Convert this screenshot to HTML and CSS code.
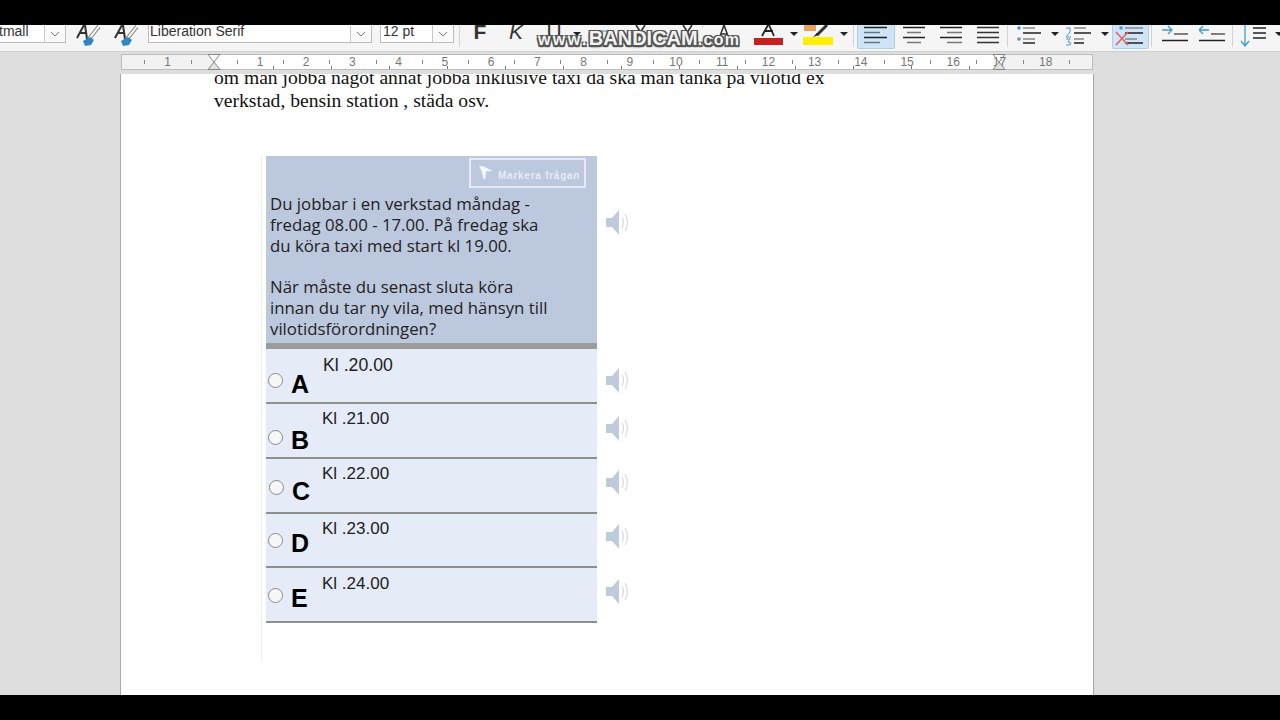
FILE: index.html
```html
<!DOCTYPE html>
<html lang="sv">
<head>
<meta charset="utf-8">
<title>Vilotid</title>
<link rel="stylesheet" href="styles.css">
</head>
<body>
<div class="app">
  <div class="black-bar"></div>
  <div class="toolbar">
    <div class="combo combo-style"><span class="combo-text tight">tmall</span><span class="combo-btn"><svg width="10" height="6" viewBox="0 0 10 6"><path d="M1 1l4 4 4-4" fill="none" stroke="#777"/></svg></span></div>
    <svg class="m9" width="25" height="27" viewBox="0 0 25 27"><path d="M2 13L9 0M10 0l2 14M4 8h7" fill="none" stroke="#333" stroke-width="2"/><path d="M25 0L14 14" stroke="#888" stroke-width="4"/><path d="M25 0L14 14" stroke="#fff" stroke-width="2"/><path d="M8 16l7-4 4 3-3 5-6 1z" fill="#2f86c0"/></svg>
    <svg class="m13" width="25" height="27" viewBox="0 0 25 27"><path d="M2 13L9 0M10 0l2 14M4 8h7" fill="none" stroke="#333" stroke-width="2"/><path d="M25 0L14 14" stroke="#888" stroke-width="4"/><path d="M25 0L14 14" stroke="#fff" stroke-width="2"/><path d="M8 16l7-4 4 3-3 5-6 1z" fill="#2f86c0"/></svg>
    <div class="combo combo-font m10"><span class="combo-text">Liberation Serif</span><span class="combo-btn"><svg width="10" height="6" viewBox="0 0 10 6"><path d="M1 1l4 4 4-4" fill="none" stroke="#777"/></svg></span></div>
    <div class="combo combo-size m8"><span class="combo-text">12 pt</span><span class="combo-btn"><svg width="10" height="6" viewBox="0 0 10 6"><path d="M1 1l4 4 4-4" fill="none" stroke="#777"/></svg></span></div>
    <span class="sep m5"></span>
    <span class="fmt fmt-b m12">F</span>
    <span class="fmt fmt-i m20">K</span>
    <span class="fmt fmt-u m21">U</span>
    <span class="caret m10"></span>
    <svg class="m9" width="155" height="27" viewBox="0 0 155 27"><path d="M2 6h22" stroke="#3f8fc0"/><path d="M46 0l9 14M55 0l-9 14M93 0l9 14M102 0l-9 14" stroke="#333" stroke-width="1.6"/><path d="M35 14h3M113 0v3" stroke="#ddd"/><path d="M129 14l5-14 5 14M131 9h6" fill="none" stroke="#333" stroke-width="1.6"/><path d="M140 15l5-5 3 3-5 5z" fill="#c8343a"/></svg>
    <svg class="m9" width="29" height="27" viewBox="0 0 29 27"><path d="M8 11L14 0M20 11L15 0M10 6h9" fill="none" stroke="#222" stroke-width="1.8"/><rect x="0" y="13" width="29" height="7" fill="#c8201e"/></svg>
    <span class="caret m7"></span>
    <svg class="m5" width="30" height="27" viewBox="0 0 30 27"><rect x="1" y="0" width="12" height="6" fill="#e9a45c"/><path d="M14 10L24 0" stroke="#333" stroke-width="3"/><path d="M10 12l4-4 2 2z" fill="#222"/><rect x="0" y="12" width="30" height="8" fill="#fef000"/></svg>
    <span class="caret m7"></span>
    <span class="sep m5"></span>
    <span class="tool-on m3"><svg width="37" height="24" viewBox="0 0 37 24"><path d="M7 2.500h23M7 12.500h23" stroke="#222" stroke-width="1.500"/><path d="M7 7.500h16M7 17.500h16" stroke="#5d7a8a" stroke-width="1.500"/></svg></span>
    <svg class="m8" width="22" height="27" viewBox="0 0 22 27"><path d="M0 2.500h22M0 12.500h22" stroke="#222" stroke-width="1.500"/><path d="M4 7.500h14M4 17.500h14" stroke="#777" stroke-width="1.500"/></svg>
    <svg class="m15" width="22" height="27" viewBox="0 0 22 27"><path d="M0 2.500h22M0 12.500h22" stroke="#222" stroke-width="1.500"/><path d="M7 7.500h15M7 17.500h15" stroke="#777" stroke-width="1.500"/></svg>
    <svg class="m15" width="22" height="27" viewBox="0 0 22 27"><path d="M0 2.500h22M0 7.500h22M0 12.500h22M0 17.500h22" stroke="#333" stroke-width="1.500"/></svg>
    <span class="sep m8"></span>
    <svg class="m9" width="24" height="27" viewBox="0 0 24 27"><circle cx="2" cy="3" r="1.800" fill="#4c9bc9"/><circle cx="2" cy="14" r="1.800" fill="#4c9bc9"/><path d="M6 3h12M6 14h12" stroke="#888" stroke-width="1.500"/><path d="M6 8h18M6 18h12" stroke="#222" stroke-width="1.500"/></svg>
    <span class="caret m10"></span>
    <svg class="m7" width="25" height="27" viewBox="0 0 25 27"><path d="M0 3h4v4l-4 5h5M0 14h4l-2 3 3 1-1 2H0" fill="none" stroke="#4c9bc9"/><path d="M8 3h12M8 14h10" stroke="#888" stroke-width="1.500"/><path d="M8 8h17M8 18h10" stroke="#222" stroke-width="1.500"/></svg>
    <span class="caret m10"></span>
    <span class="tool-on m3"><svg width="36" height="24" viewBox="0 0 36 24"><circle cx="9" cy="3" r="1.800" fill="#4c9bc9"/><path d="M13 3h18M13 14h12" stroke="#888" stroke-width="1.500"/><path d="M13 8h18M13 18h18" stroke="#222" stroke-width="1.500"/><path d="M4 7l12 13M16 7L4 20" stroke="#e0656a" stroke-width="1.700"/></svg></span>
    <span class="sep m2"></span>
    <svg class="m10" width="26" height="27" viewBox="0 0 26 27"><path d="M0 5h9M6 1l4 4-4 4" fill="none" stroke="#3f9bd0" stroke-width="1.300"/><path d="M12 9h14" stroke="#555" stroke-width="1.500"/><path d="M0 15.500h26" stroke="#222" stroke-width="1.500"/></svg>
    <svg class="m11" width="26" height="27" viewBox="0 0 26 27"><path d="M10 5H1M4 1L0 5l4 4" fill="none" stroke="#3f9bd0" stroke-width="1.300"/><path d="M12 9h14" stroke="#555" stroke-width="1.500"/><path d="M0 15.500h26" stroke="#222" stroke-width="1.500"/></svg>
    <span class="sep m7"></span>
    <svg class="m7" width="26" height="27" viewBox="0 0 26 27"><path d="M5 0v21M1 16l4 5 4-5" fill="none" stroke="#3f9bd0" stroke-width="1.300"/><path d="M13 3h13M13 8h13M13 13h13" stroke="#222" stroke-width="1.500"/></svg>
    <span class="caret m9"></span>
    <div class="watermark"><span class="wm-www">www.</span>BANDICAM<span class="wm-com">.com</span></div>
  </div>
  <div class="ruler-row">
    <div class="ruler">
      <span class="cell tick"></span><span class="cell">1</span><span class="cell tick"></span>
      <span class="cell"><svg class="hourglass" width="14" height="16" viewBox="0 0 14 16"><path d="M1 .5h12L7 8z" fill="#fff" stroke="#888"/><path d="M7 8l6 7.500H1z" fill="#e2e2e2" stroke="#888"/></svg></span>
      <span class="cell tick"></span><span class="cell">1</span><span class="cell tick"></span><span class="cell">2</span><span class="cell tick"></span><span class="cell">3</span><span class="cell tick"></span><span class="cell">4</span><span class="cell tick"></span><span class="cell">5</span><span class="cell tick"></span><span class="cell">6</span><span class="cell tick"></span><span class="cell">7</span><span class="cell tick"></span><span class="cell">8</span><span class="cell tick"></span><span class="cell">9</span><span class="cell tick"></span><span class="cell">10</span><span class="cell tick"></span><span class="cell">11</span><span class="cell tick"></span><span class="cell">12</span><span class="cell tick"></span><span class="cell">13</span><span class="cell tick"></span><span class="cell">14</span><span class="cell tick"></span><span class="cell">15</span><span class="cell tick"></span><span class="cell">16</span><span class="cell tick"></span>
      <span class="cell">17<svg class="hourglass" width="14" height="16" viewBox="0 0 14 16"><path d="M7 8l6 7.500H1z" fill="#e2e2e2" stroke="#888"/><path d="M1 .5h12L7 8z" fill="none" stroke="#888"/></svg></span>
      <span class="cell tick"></span><span class="cell">18</span><span class="cell tick"></span>
    </div>
  </div>
  <div class="workspace">
    <main class="page">
      <p class="doc-text">om man jobba något annat jobba inklusive taxi då ska man tänka på vilotid ex<br>verkstad, bensin station , städa osv.</p>
      <section class="quiz">
        <div class="row">
          <div class="question">
            <div class="flag-btn"><svg width="17" height="17" viewBox="0 0 17 17"><path d="M1 1l5 .5 9 4.500-7 .5-.5 7.500h-2l-2-8z" fill="#f2f5fa"/></svg><span>Markera frågan</span></div>
            <p class="q-text">Du jobbar i en verkstad måndag -<br>fredag 08.00 - 17.00. På fredag ska<br>du köra taxi med start kl 19.00.<br><br>När måste du senast sluta köra<br>innan du tar ny vila, med hänsyn till<br>vilotidsförordningen?</p>
          </div>
          <svg class="speaker spk-q" width="24" height="25" viewBox="0 0 24 25"><path d="M0 8h6l7-8v25l-7-8H0z" fill="#bfcadc"/><path d="M16 7q3 5.500 0 11M19 4q5 8.500 0 17" fill="none" stroke="#d4dbe7" stroke-width="1.200"/></svg>
        </div>
        <div class="row">
          <div class="option opt-a"><span class="radio"></span><b class="letter">A</b><span class="answer">Kl .20.00</span></div>
          <svg class="speaker spk-a" width="24" height="25" viewBox="0 0 24 25"><path d="M0 8h6l7-8v25l-7-8H0z" fill="#bfcadc"/><path d="M16 7q3 5.500 0 11M19 4q5 8.500 0 17" fill="none" stroke="#d4dbe7" stroke-width="1.200"/></svg>
        </div>
        <div class="row">
          <div class="option opt-b"><span class="radio"></span><b class="letter">B</b><span class="answer">Kl .21.00</span></div>
          <svg class="speaker spk-b" width="24" height="25" viewBox="0 0 24 25"><path d="M0 8h6l7-8v25l-7-8H0z" fill="#bfcadc"/><path d="M16 7q3 5.500 0 11M19 4q5 8.500 0 17" fill="none" stroke="#d4dbe7" stroke-width="1.200"/></svg>
        </div>
        <div class="row">
          <div class="option opt-c"><span class="radio"></span><b class="letter">C</b><span class="answer">Kl .22.00</span></div>
          <svg class="speaker spk-c" width="24" height="25" viewBox="0 0 24 25"><path d="M0 8h6l7-8v25l-7-8H0z" fill="#bfcadc"/><path d="M16 7q3 5.500 0 11M19 4q5 8.500 0 17" fill="none" stroke="#d4dbe7" stroke-width="1.200"/></svg>
        </div>
        <div class="row">
          <div class="option opt-d"><span class="radio"></span><b class="letter">D</b><span class="answer">Kl .23.00</span></div>
          <svg class="speaker spk-d" width="24" height="25" viewBox="0 0 24 25"><path d="M0 8h6l7-8v25l-7-8H0z" fill="#bfcadc"/><path d="M16 7q3 5.500 0 11M19 4q5 8.500 0 17" fill="none" stroke="#d4dbe7" stroke-width="1.200"/></svg>
        </div>
        <div class="row">
          <div class="option opt-e"><span class="radio"></span><b class="letter">E</b><span class="answer">Kl .24.00</span></div>
          <svg class="speaker spk-e" width="24" height="25" viewBox="0 0 24 25"><path d="M0 8h6l7-8v25l-7-8H0z" fill="#bfcadc"/><path d="M16 7q3 5.500 0 11M19 4q5 8.500 0 17" fill="none" stroke="#d4dbe7" stroke-width="1.200"/></svg>
        </div>
      </section>
    </main>
  </div>
  <div class="black-bar"></div>
</div>
</body>
</html>
```
FILE: styles.css
```css
* { box-sizing: border-box; }
html, body { margin: 0; padding: 0; }
body { width: 1280px; height: 720px; overflow: hidden; background: #000; font-family: "Liberation Sans", Arial, sans-serif; }
.app { display: flex; flex-direction: column; height: 720px; }
.black-bar { height: 25px; flex: none; background: #000; }

/* toolbar */
.toolbar { position: relative; flex: none; height: 27px; display: flex; align-items: flex-start; background: #f5f5f5; border-bottom: 1px solid #cfcfcf; overflow: hidden; }
.toolbar > svg { flex: none; }
.combo { flex: none; display: flex; height: 18px; margin-top: 0; background: #fff; border: 1px solid #bdbdbd; border-top: 0; color: #333; font-size: 14px; line-height: 13px; }
.combo-style { width: 66px; border-left: 0; }
.combo-font { width: 224px; }
.combo-size { width: 74px; }
.combo-text { flex: 1; padding-left: 1px; white-space: nowrap; overflow: hidden; }
.combo-size .combo-text { padding-left: 2px; }
.tight { margin-left: -1px; padding-left: 0; }
.combo-btn { flex: none; width: 21px; display: flex; align-items: center; justify-content: center; border-left: 1px solid #c8c8c8; background: #fafafa; }
.sep { flex: none; width: 1px; height: 22px; background: #d2d2d2; }
.caret { flex: none; width: 0; height: 0; margin-top: 7px; border-style: solid; border-width: 4px 4px 0; border-color: #222 transparent transparent; }
.fmt { flex: none; width: 16px; height: 14px; font-size: 21px; line-height: 14px; color: #333; text-align: center; overflow: hidden; }
.fmt-b { font-weight: 700; }
.fmt-i { font-style: italic; }
.fmt-u { width: 18px; }
.tool-on { flex: none; display: block; height: 24px; background: #cfe5f7; border: 1px solid #add0ea; border-top: 0; border-radius: 0 0 2px 2px; }
.tool-on svg { display: block; margin-left: -1px; }
.watermark { position: absolute; left: 538px; top: 3px; font-size: 20px; line-height: 20px; font-weight: 700; color: #f2f2f2; white-space: nowrap; text-shadow: 1.500px 1.500px 0 #555, -1.500px -1.500px 0 #555, 1.500px -1.500px 0 #555, -1.500px 1.500px 0 #555, 0 2px 2px #333; }
.wm-www { font-size: 16px; letter-spacing: 2.400px; }
.wm-com { font-size: 16px; letter-spacing: 1.300px; }
.m2 { margin-left: 2px; } .m3 { margin-left: 3px; } .m5 { margin-left: 5px; } .m7 { margin-left: 7px; }
.m8 { margin-left: 8px; } .m9 { margin-left: 9px; } .m10 { margin-left: 10px; } .m11 { margin-left: 11px; }
.m12 { margin-left: 12px; } .m13 { margin-left: 13px; } .m15 { margin-left: 15px; } .m20 { margin-left: 20px; } .m21 { margin-left: 21px; }

/* ruler */
.ruler-row { flex: none; height: 22px; padding: 2px 0 0 121px; background: #dedede; }
.ruler { display: flex; width: 972px; height: 16px; padding-left: 10.900px; border: 1px solid #bdbdbd;
  background:
    repeating-linear-gradient(to right, #777 0 1px, transparent 1px 58px) 93px 100% / 786px 3px no-repeat,
    linear-gradient(to right, #f2f2f2 92px, #fff 92px, #fff 878px, #f2f2f2 878px); }
.cell { position: relative; flex: none; width: 23.120px; text-align: center; font-size: 12px; line-height: 14px; color: #777; white-space: nowrap; }
.tick::before { content: ""; position: absolute; left: 50%; top: 5px; width: 1px; height: 4px; background: #888; }
.hourglass { position: absolute; left: 4.500px; top: -1px; }

/* workspace & page */
.workspace { flex: 1; min-height: 0; display: flex; padding-left: 120px; background: #dedede; overflow: hidden; }
.page { width: 974px; height: 100%; overflow: hidden; background: #fff; border-left: 1px solid #a8a8a8; border-right: 1px solid #a8a8a8; }
.doc-text { margin: -8px 0 0 93px; font-family: "Liberation Serif", "Times New Roman", serif; font-size: 19.600px; line-height: 23px; color: #111; white-space: nowrap; }

/* quiz */
.quiz { width: 369px; height: 506px; margin: 44px 0 0 140px; padding-left: 4px; border-left: 1px solid #eee; }
.row { display: flex; align-items: flex-start; }
.speaker { flex: none; margin-left: 9px; }
.spk-q { margin-top: 54px; }
.spk-a { margin-top: 19px; }
.spk-b { margin-top: 12px; }
.spk-c { margin-top: 11px; }
.spk-d { margin-top: 10px; }
.spk-e { margin-top: 11px; }
.question { flex: none; width: 331px; height: 193px; background: #bcc8dd; border-bottom: 6px solid #9c9c9c; }
.flag-btn { display: flex; align-items: center; width: 117px; height: 30px; margin: 2px 0 0 203px; padding: 0 0 0 7px; border: 2.500px solid #e6ebf3; color: #e6ebf3; font-size: 10px; font-weight: 700; white-space: nowrap; }
.flag-btn span { margin: 5px 0 0 3px; letter-spacing: .75px; }
.q-text { margin: 6px 0 0 4px; font-family: "Open Sans", sans-serif; font-size: 16.800px; line-height: 20.830px; color: #222; white-space: nowrap; }
.option { flex: none; position: relative; width: 331px; height: 55px; background: #e5ebf7; border-bottom: 2px solid #8f8f8f; }
.opt-d { height: 54px; }
.radio { position: absolute; left: 2px; width: 15px; height: 15px; border: 1.500px solid #8a8a8a; border-radius: 50%; background: #f6f7f9; }
.letter { position: absolute; left: 25px; font-size: 25px; line-height: 25px; color: #000; }
.answer { position: absolute; left: 56px; font-size: 17px; line-height: 20px; color: #222; white-space: nowrap; }
.opt-a .radio { top: 24px; } .opt-a .letter { top: 23px; } .opt-a .answer { top: 6px; left: 57px; font-size: 17.700px; }
.opt-b .radio { top: 26px; } .opt-b .letter { top: 24px; } .opt-b .answer { top: 5px; }
.opt-c .radio { top: 21px; left: 3px; } .opt-c .letter { top: 20px; left: 26px; } .opt-c .answer { top: 5px; }
.opt-d .radio { top: 19px; } .opt-d .letter { top: 17px; } .opt-d .answer { top: 5px; }
.opt-e .radio { top: 20px; } .opt-e .letter { top: 18px; } .opt-e .answer { top: 6px; }
```
